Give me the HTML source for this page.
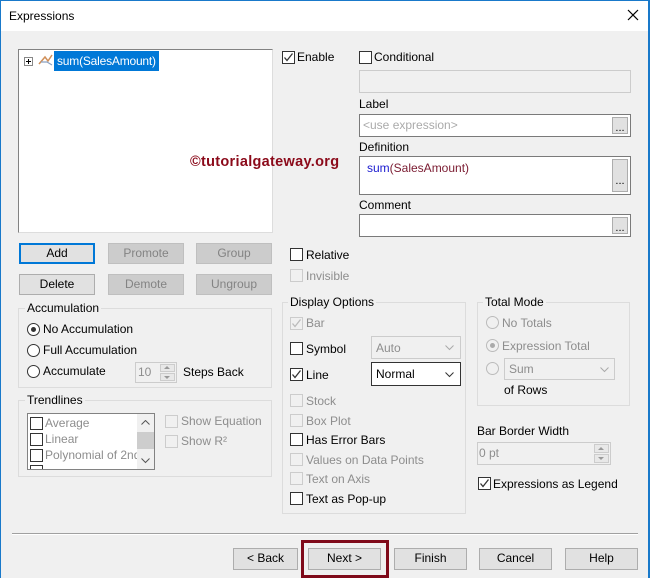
<!DOCTYPE html>
<html><head><meta charset="utf-8"><style>
*{box-sizing:border-box;margin:0;padding:0}
body{width:650px;height:578px;overflow:hidden;background:#f0f0f0;font-family:"Liberation Sans",sans-serif;font-size:12px;color:#000;position:relative}
div,span{position:absolute}
.t{white-space:nowrap;line-height:14px}
.g{color:#8d8d8d}
.cb{width:13px;height:13px;border:1px solid #333;background:#fff}
.dcb{width:13px;height:13px;border:1px solid #ccc;background:#f0f0f0}
.rb{width:13px;height:13px;border:1px solid #333;border-radius:50%;background:#fff}
.drb{width:13px;height:13px;border:1px solid #bbb;border-radius:50%;background:#f0f0f0}
.btn{border:1px solid #adadad;background:#e1e1e1;text-align:center;line-height:19px}
.dbtn{border:1px solid #bfbfbf;background:#cccccc;color:#838383;text-align:center;line-height:18px}
.grp{border:1px solid #dcdcdc}
.lg{background:#f0f0f0;padding:0 2px;top:-8px;left:6px;line-height:14px;white-space:nowrap}
.fld{background:#fff;border:1px solid #7a7a7a}
.dots{border:1px solid #adadad;background:#e1e1e1;width:16px;height:17px;font-size:11px;text-align:center;line-height:20px}
.up{width:0;height:0;border-left:3px solid transparent;border-right:3px solid transparent;border-bottom:3px solid #999}
.dn{width:0;height:0;border-left:3px solid transparent;border-right:3px solid transparent;border-top:3px solid #999}
</style></head><body>
<div style="left:0;top:0;width:650px;height:31px;background:#fff"></div>
<div style="left:0;top:0;width:1px;height:578px;background:#1979ca"></div>
<div style="left:648px;top:0;width:2px;height:578px;background:#1979ca"></div>
<div style="left:0;top:0;width:650px;height:1px;background:#1979ca"></div>
<div class="t" style="left:9px;top:9px">Expressions</div>
<svg style="position:absolute;left:627px;top:9px" width="12" height="12"><path d="M1 1L11 11M11 1L1 11" stroke="#000" stroke-width="1.2"/></svg>

<div style="left:18px;top:49px;width:255px;height:184px;background:#fff;border:1px solid #828282;border-right-color:#ddd;border-bottom-color:#ddd"></div>
<div style="left:24px;top:57px;width:9px;height:9px;border:1px solid #888;background:#fff"></div>
<div style="left:26px;top:61px;width:5px;height:1px;background:#000"></div>
<div style="left:28px;top:59px;width:1px;height:5px;background:#000"></div>
<svg style="position:absolute;left:38px;top:53px" width="16" height="14"><path d="M1 11L7 4L10 8L14 2" stroke="#d0905a" stroke-width="1.5" fill="none"/><path d="M3 9L9 9L14 12" stroke="#8aa0c0" stroke-width="1.2" fill="none"/></svg>
<div class="t" style="left:54px;top:51px;height:20px;background:#0078d7;color:#fff;line-height:20px;padding:0 3px;letter-spacing:-0.2px">sum(SalesAmount)</div>
<div class="t" style="left:190px;top:154px;color:#8b0a1a;font-weight:bold;font-size:14.5px;line-height:16px;letter-spacing:0.3px">©tutorialgateway.org</div>

<div class="btn" style="left:19px;top:243px;width:76px;height:21px;border:2px solid #0078d7;line-height:17px">Add</div>
<div class="dbtn" style="left:108px;top:243px;width:76px;height:21px">Promote</div>
<div class="dbtn" style="left:196px;top:243px;width:76px;height:21px">Group</div>
<div class="btn" style="left:19px;top:274px;width:76px;height:21px">Delete</div>
<div class="dbtn" style="left:108px;top:274px;width:76px;height:21px">Demote</div>
<div class="dbtn" style="left:196px;top:274px;width:76px;height:21px">Ungroup</div>

<div class="grp" style="left:18px;top:308px;width:254px;height:80px"><span class="lg">Accumulation</span></div>
<div class="rb" style="left:27px;top:323px"></div><div style="left:31px;top:327px;width:5px;height:5px;border-radius:50%;background:#333"></div>
<div class="t" style="left:43px;top:322px">No Accumulation</div>
<div class="rb" style="left:27px;top:344px"></div><div class="t" style="left:43px;top:343px">Full Accumulation</div>
<div class="rb" style="left:27px;top:365px"></div><div class="t" style="left:43px;top:364px">Accumulate</div>
<div style="left:135px;top:362px;width:42px;height:21px;border:1px solid #ccc;background:#f0f0f0"></div>
<div class="t g" style="left:138px;top:365px">10</div>
<div style="left:160px;top:364px;width:15px;height:8px;border:1px solid #ccc;background:#e8e8e8"></div>
<div style="left:160px;top:373px;width:15px;height:8px;border:1px solid #ccc;background:#e8e8e8"></div>
<div class="up" style="left:164px;top:366px"></div><div class="dn" style="left:164px;top:376px"></div>
<div class="t" style="left:183px;top:365px">Steps Back</div>

<div class="grp" style="left:18px;top:400px;width:254px;height:77px"><span class="lg">Trendlines</span></div>
<div style="left:27px;top:413px;width:128px;height:57px;border:1px solid #828282;background:#fff;overflow:hidden">
 <div class="cb" style="left:2px;top:3px"></div><div class="t g" style="left:17px;top:2px">Average</div>
 <div class="cb" style="left:2px;top:19px"></div><div class="t g" style="left:17px;top:18px">Linear</div>
 <div class="cb" style="left:2px;top:35px"></div><div class="t g" style="left:17px;top:34px">Polynomial of 2nd d</div>
 <div class="cb" style="left:2px;top:51px"></div>
 <div style="left:109px;top:0;width:17px;height:55px;background:#f0f0f0"></div>
 <div style="left:109px;top:18px;width:17px;height:17px;background:#cdcdcd"></div>
 <svg style="position:absolute;left:113px;top:6px" width="9" height="6"><path d="M0.5 4.5L4.5 0.5L8.5 4.5" stroke="#555" fill="none"/></svg>
 <svg style="position:absolute;left:113px;top:44px" width="9" height="6"><path d="M0.5 0.5L4.5 4.5L8.5 0.5" stroke="#555" fill="none"/></svg>
</div>
<div class="dcb" style="left:165px;top:415px"></div><div class="t g" style="left:181px;top:414px">Show Equation</div>
<div class="dcb" style="left:165px;top:435px"></div><div class="t g" style="left:181px;top:434px">Show R²</div>

<div class="cb" style="left:282px;top:51px"></div>
<svg style="position:absolute;left:283px;top:52px" width="11" height="11"><path d="M1.5 5.5L4 8.5L9.5 1.5" stroke="#333" stroke-width="1.3" fill="none"/></svg>
<div class="t" style="left:297px;top:50px">Enable</div>
<div class="cb" style="left:359px;top:51px"></div><div class="t" style="left:374px;top:50px">Conditional</div>
<div style="left:359px;top:70px;width:272px;height:23px;border:1px solid #ccc;background:#f0f0f0"></div>
<div class="t" style="left:359px;top:97px">Label</div>
<div class="fld" style="left:359px;top:114px;width:272px;height:23px"></div>
<div class="t" style="left:363px;top:118px;color:#aaa">&lt;use expression&gt;</div>
<div class="dots" style="left:612px;top:117px">...</div>
<div class="t" style="left:359px;top:140px">Definition</div>
<div class="fld" style="left:359px;top:156px;width:272px;height:39px"></div>
<div class="t" style="left:367px;top:161px;color:#1a1ad0">sum<span style="position:static;color:#7a1a30">(SalesAmount)</span></div>
<div class="dots" style="left:612px;top:159px;height:33px;line-height:42px">...</div>
<div class="t" style="left:359px;top:198px">Comment</div>
<div class="fld" style="left:359px;top:214px;width:272px;height:23px"></div>
<div class="dots" style="left:612px;top:217px">...</div>

<div class="cb" style="left:290px;top:248px"></div><div class="t" style="left:306px;top:248px">Relative</div>
<div class="dcb" style="left:290px;top:269px"></div><div class="t g" style="left:306px;top:269px">Invisible</div>

<div class="grp" style="left:282px;top:302px;width:184px;height:212px"><span class="lg" style="left:5px">Display Options</span></div>
<div class="dcb" style="left:290px;top:317px"></div>
<svg style="position:absolute;left:291px;top:318px" width="11" height="11"><path d="M1.5 5.5L4 8.5L9.5 1.5" stroke="#bbb" stroke-width="1.3" fill="none"/></svg>
<div class="t g" style="left:306px;top:316px">Bar</div>
<div class="cb" style="left:290px;top:342px"></div><div class="t" style="left:306px;top:342px">Symbol</div>
<div style="left:371px;top:336px;width:90px;height:23px;border:1px solid #ccc;background:#f0f0f0"></div>
<div class="t g" style="left:376px;top:341px">Auto</div>
<svg style="position:absolute;left:445px;top:345px" width="9" height="6"><path d="M0.5 0.5L4.5 4.5L8.5 0.5" stroke="#aaa" fill="none"/></svg>
<div class="cb" style="left:290px;top:368px"></div>
<svg style="position:absolute;left:291px;top:369px" width="11" height="11"><path d="M1.5 5.5L4 8.5L9.5 1.5" stroke="#333" stroke-width="1.3" fill="none"/></svg>
<div class="t" style="left:306px;top:368px">Line</div>
<div style="left:371px;top:362px;width:90px;height:24px;border:1px solid #333;background:#fff"></div>
<div class="t" style="left:376px;top:367px">Normal</div>
<svg style="position:absolute;left:445px;top:372px" width="9" height="6"><path d="M0.5 0.5L4.5 4.5L8.5 0.5" stroke="#333" fill="none"/></svg>
<div class="dcb" style="left:290px;top:394px"></div><div class="t g" style="left:306px;top:394px">Stock</div>
<div class="dcb" style="left:290px;top:414px"></div><div class="t g" style="left:306px;top:414px">Box Plot</div>
<div class="cb" style="left:290px;top:433px"></div><div class="t" style="left:306px;top:433px">Has Error Bars</div>
<div class="dcb" style="left:290px;top:453px"></div><div class="t g" style="left:306px;top:453px">Values on Data Points</div>
<div class="dcb" style="left:290px;top:472px"></div><div class="t g" style="left:306px;top:472px">Text on Axis</div>
<div class="cb" style="left:290px;top:492px"></div><div class="t" style="left:306px;top:492px">Text as Pop-up</div>

<div class="grp" style="left:477px;top:302px;width:153px;height:104px"><span class="lg" style="left:5px">Total Mode</span></div>
<div class="drb" style="left:486px;top:316px"></div><div class="t g" style="left:502px;top:316px">No Totals</div>
<div class="drb" style="left:486px;top:339px"></div><div style="left:490px;top:343px;width:5px;height:5px;border-radius:50%;background:#aaa"></div>
<div class="t g" style="left:502px;top:339px">Expression Total</div>
<div class="drb" style="left:486px;top:362px"></div>
<div style="left:504px;top:358px;width:111px;height:22px;border:1px solid #ccc;background:#f0f0f0"></div>
<div class="t g" style="left:509px;top:362px">Sum</div>
<svg style="position:absolute;left:600px;top:367px" width="9" height="6"><path d="M0.5 0.5L4.5 4.5L8.5 0.5" stroke="#aaa" fill="none"/></svg>
<div class="t" style="left:504px;top:383px">of Rows</div>

<div class="t" style="left:477px;top:424px">Bar Border Width</div>
<div style="left:477px;top:442px;width:134px;height:23px;border:1px solid #ccc;background:#f0f0f0"></div>
<div class="t g" style="left:479px;top:446px">0 pt</div>
<div style="left:594px;top:444px;width:15px;height:9px;border:1px solid #ccc;background:#e8e8e8"></div>
<div style="left:594px;top:454px;width:15px;height:9px;border:1px solid #ccc;background:#e8e8e8"></div>
<div class="up" style="left:598px;top:447px"></div><div class="dn" style="left:598px;top:457px"></div>
<div class="cb" style="left:478px;top:477px"></div>
<svg style="position:absolute;left:479px;top:478px" width="11" height="11"><path d="M1.5 5.5L4 8.5L9.5 1.5" stroke="#333" stroke-width="1.3" fill="none"/></svg>
<div class="t" style="left:493px;top:477px">Expressions as Legend</div>

<div style="left:12px;top:533px;width:626px;height:1px;background:#a0a0a0"></div>
<div style="left:12px;top:534px;width:626px;height:1px;background:#fff"></div>
<div class="btn" style="left:233px;top:548px;width:65px;height:22px">&lt; Back</div>
<div class="btn" style="left:308px;top:548px;width:73px;height:22px">Next &gt;</div>
<div class="btn" style="left:394px;top:548px;width:73px;height:22px">Finish</div>
<div class="btn" style="left:479px;top:548px;width:73px;height:22px">Cancel</div>
<div class="btn" style="left:565px;top:548px;width:73px;height:22px">Help</div>
<div style="left:301px;top:540px;width:88px;height:38px;border:3px solid #7f0a1a"></div>
</body></html>
